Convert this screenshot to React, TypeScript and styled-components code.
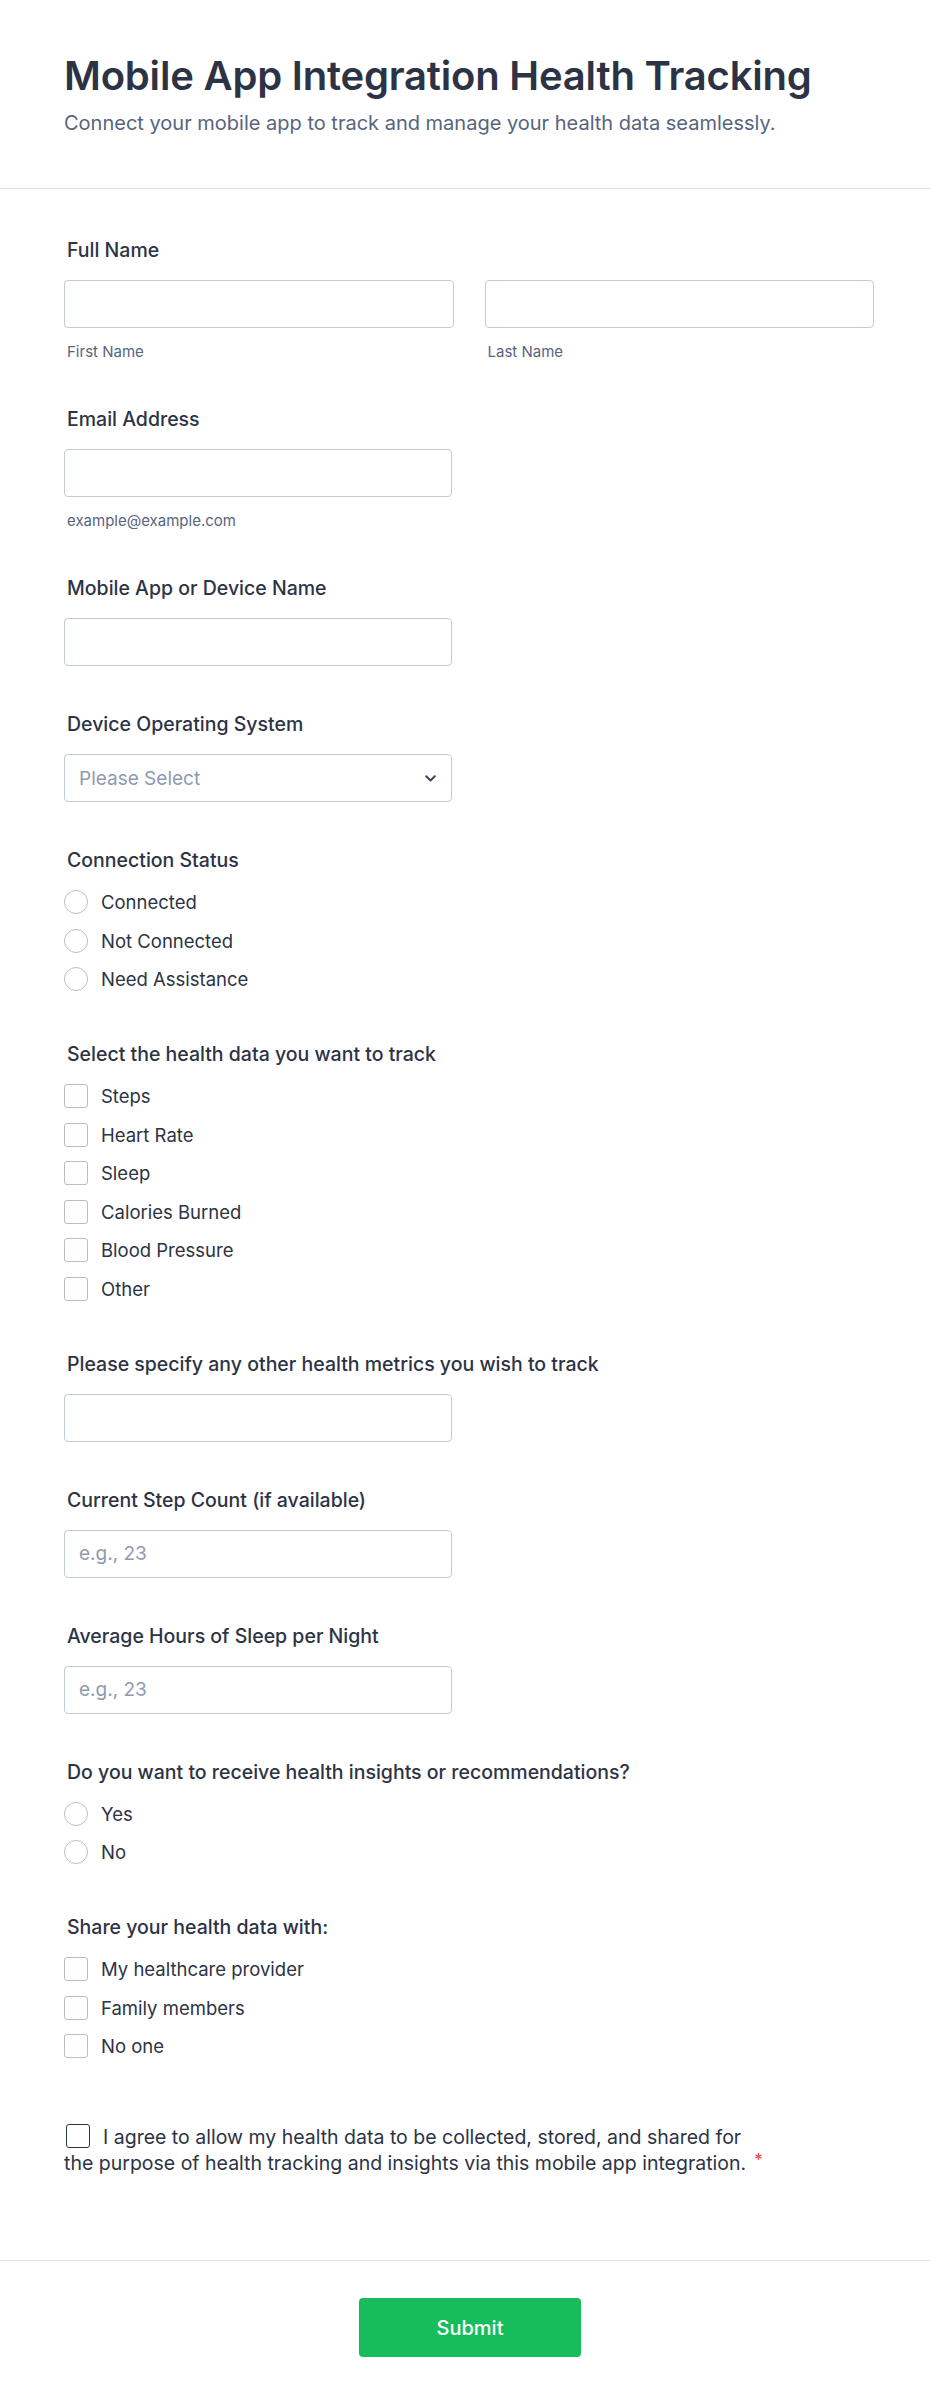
import React from 'react';
import styled, { createGlobalStyle } from 'styled-components';

const GlobalStyle = createGlobalStyle`
  * { box-sizing: border-box; }
  body {
    margin: 0;
    background: #fff;
    font-family: Inter, "Noto Sans", sans-serif;
    color: #2c3345;
  }
`;

const Page = styled.div`
  width: 930px;
  display: flex;
  flex-direction: column;
`;

const Header = styled.header`
  padding: 52px 56px 53px 64px;
  border-bottom: 1px solid #dcdfe8;
`;

const Title = styled.h1`
  margin: 0;
  font-size: 40px;
  line-height: 48px;
  font-weight: 600;
  letter-spacing: -0.2px;
  color: #2c3345;
`;

const Subtitle = styled.p`
  margin: 11px 0 0;
  font-size: 20px;
  line-height: 24px;
  color: #57647e;
`;

const Body = styled.div`
  padding: 49px 56px 83px 64px;
  display: flex;
  flex-direction: column;
  gap: 46px;
`;

const Field = styled.div<{ $extra?: number }>`
  display: flex;
  flex-direction: column;
  margin-top: ${p => p.$extra || 0}px;
`;

const Label = styled.div<{ $mb?: number }>`
  font-size: 19.5px;
  line-height: 24px;
  font-weight: 500;
  padding-left: 3px;
  margin-bottom: ${p => p.$mb ?? 18}px;
`;

const Row = styled.div`
  display: flex;
  gap: 31px;
`;

const Col = styled.div`
  flex: 1;
  display: flex;
  flex-direction: column;
`;

const Input = styled.input<{ $w?: string }>`
  width: ${p => p.$w || '388px'};
  height: 48px;
  border: 1px solid #c3cad8;
  border-radius: 4px;
  padding: 0 14px;
  font-family: inherit;
  font-size: 19px;
  color: #2c3345;
  background: #fff;
  &::placeholder { color: #8d9ab0; }
`;

const Sub = styled.div`
  margin-top: 15px;
  font-size: 15px;
  line-height: 18px;
  color: #57647e;
  padding-left: 3px;
`;

const Select = styled.div`
  width: 388px;
  height: 48px;
  border: 1px solid #c3cad8;
  border-radius: 4px;
  padding: 0 15px 0 14px;
  display: flex;
  align-items: center;
  justify-content: space-between;
  font-size: 19px;
  color: #8d9ab0;
`;

const Options = styled.div`
  display: flex;
  flex-direction: column;
  gap: 4.5px;
`;

const Option = styled.label`
  height: 34px;
  display: flex;
  align-items: center;
  gap: 13px;
  font-size: 18.5px;
  color: #2c3345;
`;

const Mark = styled.span<{ $round?: boolean; $dark?: boolean }>`
  width: 24px;
  height: 24px;
  flex: none;
  display: inline-block;
  border: ${p => (p.$dark ? '1.5px solid #2c3345' : '1px solid #b8bdc9')};
  border-radius: ${p => (p.$round ? '50%' : '3px')};
  background: #fff;
`;

const Consent = styled.div`
  max-width: 704px;
  font-size: 19.5px;
  line-height: 26px;
  color: #2c3345;
  & > ${Mark} {
    vertical-align: top;
    margin: 0 13px 0 2px;
  }
`;

const Req = styled.span`
  color: #f23a3c;
  font-size: 17px;
  position: relative;
  top: -4px;
  margin-left: 8px;
`;

const Footer = styled.div`
  border-top: 1px solid #e3e5ec;
  padding: 37px 54px 50px 64px;
  display: flex;
  justify-content: center;
`;

const Button = styled.button`
  width: 222px;
  height: 59px;
  border: none;
  border-radius: 4px;
  background: #18bd5b;
  color: #fff;
  font-family: inherit;
  font-size: 20px;
  font-weight: 500;
`;

const Chevron = () => (
  <svg width="11" height="7" viewBox="0 0 11 7" fill="none">
    <path d="M1.2 1.2l4.3 4.3 4.3-4.3" stroke="#3b4560" strokeWidth="2" strokeLinecap="round" strokeLinejoin="round" />
  </svg>
);

const Choices = ({ items, round }: { items: string[]; round?: boolean }) => (
  <Options>
    {items.map(t => (
      <Option key={t}>
        <Mark $round={round} />
        {t}
      </Option>
    ))}
  </Options>
);

export default function App() {
  return (
    <Page>
      <GlobalStyle />
      <Header>
        <Title>Mobile App Integration Health Tracking</Title>
        <Subtitle>Connect your mobile app to track and manage your health data seamlessly.</Subtitle>
      </Header>
      <Body>
        <Field>
          <Label>Full Name</Label>
          <Row>
            <Col>
              <Input $w="100%" />
              <Sub>First Name</Sub>
            </Col>
            <Col>
              <Input $w="100%" />
              <Sub>Last Name</Sub>
            </Col>
          </Row>
        </Field>
        <Field>
          <Label>Email Address</Label>
          <Input />
          <Sub>example@example.com</Sub>
        </Field>
        <Field>
          <Label>Mobile App or Device Name</Label>
          <Input />
        </Field>
        <Field>
          <Label>Device Operating System</Label>
          <Select>
            Please Select
            <Chevron />
          </Select>
        </Field>
        <Field>
          <Label $mb={13}>Connection Status</Label>
          <Choices round items={['Connected', 'Not Connected', 'Need Assistance']} />
        </Field>
        <Field>
          <Label $mb={13}>Select the health data you want to track</Label>
          <Choices items={['Steps', 'Heart Rate', 'Sleep', 'Calories Burned', 'Blood Pressure', 'Other']} />
        </Field>
        <Field>
          <Label>Please specify any other health metrics you wish to track</Label>
          <Input />
        </Field>
        <Field>
          <Label>Current Step Count (if available)</Label>
          <Input placeholder="e.g., 23" />
        </Field>
        <Field>
          <Label>Average Hours of Sleep per Night</Label>
          <Input placeholder="e.g., 23" />
        </Field>
        <Field>
          <Label $mb={13}>Do you want to receive health insights or recommendations?</Label>
          <Choices round items={['Yes', 'No']} />
        </Field>
        <Field>
          <Label $mb={13}>Share your health data with:</Label>
          <Choices items={['My healthcare provider', 'Family members', 'No one']} />
        </Field>
        <Field $extra={15}>
          <Consent>
            <Mark $dark />
            I agree to allow my health data to be collected, stored, and shared for the purpose of health tracking and insights via this mobile app integration.
            <Req>*</Req>
          </Consent>
        </Field>
      </Body>
      <Footer>
        <Button>Submit</Button>
      </Footer>
    </Page>
  );
}
